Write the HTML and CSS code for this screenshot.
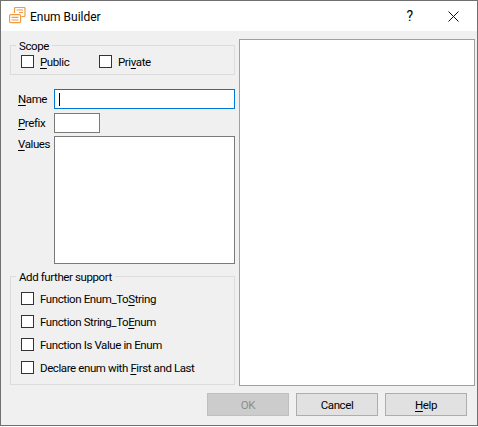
FILE: index.html
```html
<!DOCTYPE html>
<html lang="en">
<head>
<meta charset="utf-8">
<title>Enum Builder</title>
<link rel="stylesheet" href="styles.css">
</head>
<body>
<div class="window">
  <header class="titlebar">
    <svg class="app-icon" width="18" height="18" viewBox="0 0 18 18" fill="none" stroke="#f09a46" stroke-width="1.2">
      <path d="M5.5 6 V1.5 a1 1 0 0 1 1-1 h8.5 a1 1 0 0 1 1 1 v7 a1 1 0 0 1-1 1 h-2.5"/>
      <path d="M7.5 3 h6.5 M10 5.5 h4"/>
      <rect x=".6" y="7.6" width="11" height="8" rx="1.2" fill="#fff"/>
      <path d="M2.5 10.4 h7 M2.5 13 h7"/>
    </svg>
    <span class="title">Enum Builder</span>
    <span class="help-btn">?</span>
    <svg class="close-btn" width="11" height="11" viewBox="0 0 11 11" stroke="#111" stroke-width="1" fill="none"><path d="M.5 .5 L10.5 10.5 M10.5 .5 L.5 10.5"/></svg>
  </header>
  <main class="body">
    <div class="columns">
      <div class="left">
        <fieldset class="group scope">
          <legend>Scope</legend>
          <label class="check"><span class="box"></span><span class="text"><u>P</u>ublic</span></label>
          <label class="check"><span class="box"></span><span class="text">Pri<u>v</u>ate</span></label>
        </fieldset>
        <div class="fields">
          <span class="lbl"><u>N</u>ame</span>
          <div class="input focused"><span class="caret"></span></div>
          <span class="lbl"><u>P</u>refix</span>
          <div class="input short"></div>
          <span class="lbl lbl-values"><u>V</u>alues</span>
          <div class="input tall"></div>
        </div>
        <fieldset class="group support">
          <legend>Add further support</legend>
          <label class="check"><span class="box"></span><span class="text">Function Enum_To<u>S</u>tring</span></label>
          <label class="check"><span class="box"></span><span class="text">Function String_To<u>E</u>num</span></label>
          <label class="check"><span class="box"></span><span class="text">Function Is Value in Enum</span></label>
          <label class="check"><span class="box"></span><span class="text">Declare enum with <u>F</u>irst and Last</span></label>
        </fieldset>
      </div>
      <div class="preview"></div>
    </div>
    <footer class="buttons">
      <span class="btn disabled">OK</span>
      <span class="btn">Cancel</span>
      <span class="btn"><u>H</u>elp</span>
    </footer>
  </main>
</div>
</body>
</html>
```
FILE: styles.css
```css
* { box-sizing: border-box; }
html, body { margin: 0; padding: 0; background: #fff; }
body { width: 478px; height: 427px; overflow: hidden; font: 11.5px/16px Roboto, "Noto Sans", sans-serif; letter-spacing: -0.4px; color: #000; }
u { text-underline-offset: 2px; text-decoration-thickness: 1px; }
.window { width: 478px; height: 426px; border: 1px solid #707070; display: flex; flex-direction: column; }
.titlebar { height: 30px; background: #fff; display: flex; align-items: center; padding: 2px 18px 0 8px; flex: none; }
.app-icon { margin: -2px 3px 0 0; }
.title { flex: 1; font-size: 12px; letter-spacing: 0; }
.help-btn { font-size: 14px; margin-right: 35px; margin-top: -2px; letter-spacing: 0; }
.close-btn { margin-top: -2px; }
.body { flex: 1; background: #f0f0f0; padding: 8px 2px 8px 9px; display: flex; flex-direction: column; }
.columns { display: flex; gap: 4px; height: 347px; }
.left { width: 225px; display: flex; flex-direction: column; flex: none; }
.preview { flex: none; width: 236px; background: #fff; border: 1px solid #a0a0a0; }
.group { margin: 0; border: 1px solid #dcdcdc; padding: 0; min-width: 0; }
.group legend { padding: 2px 3px 0; margin-left: -5px; line-height: 14px; }
.scope { height: 38px; margin-top: -2px; display: flex; padding: 1px 0 0 10px; }
.scope .check { width: 78px; }
.check { display: flex; align-items: center; gap: 6px; height: 14px; }
.text { padding-top: 1px; }
.box { width: 13px; height: 13px; border: 1px solid #333; background: #fff; flex: none; }
.fields { display: grid; grid-template-columns: 36px 181px; grid-template-rows: 24px 23px 128px; padding-left: 8px; margin-top: 14px; align-items: start; }
.lbl { padding-top: 2px; }
.lbl-values { padding-top: 0; }
.input { background: #fff; border: 1px solid #7a7a7a; height: 20px; padding: 3px; }
.focused { border-color: #0078d7; }
.caret { display: block; width: 1px; height: 13px; background: #000; margin-left: 1px; }
.short { width: 46px; }
.tall { height: 128px; }
.support { margin-top: 4px; height: 117px; padding: 7px 0 0 10px; display: flex; flex-direction: column; gap: 9px; }
.buttons { display: flex; justify-content: flex-end; gap: 7px; margin-top: 7px; padding-right: 8px; }
.btn { width: 82px; height: 23px; background: #e1e1e1; border: 1px solid #adadad; text-align: center; line-height: 22px; }
.disabled { background: #cccccc; color: #8c8c8c; border-color: #bfbfbf; }
```
